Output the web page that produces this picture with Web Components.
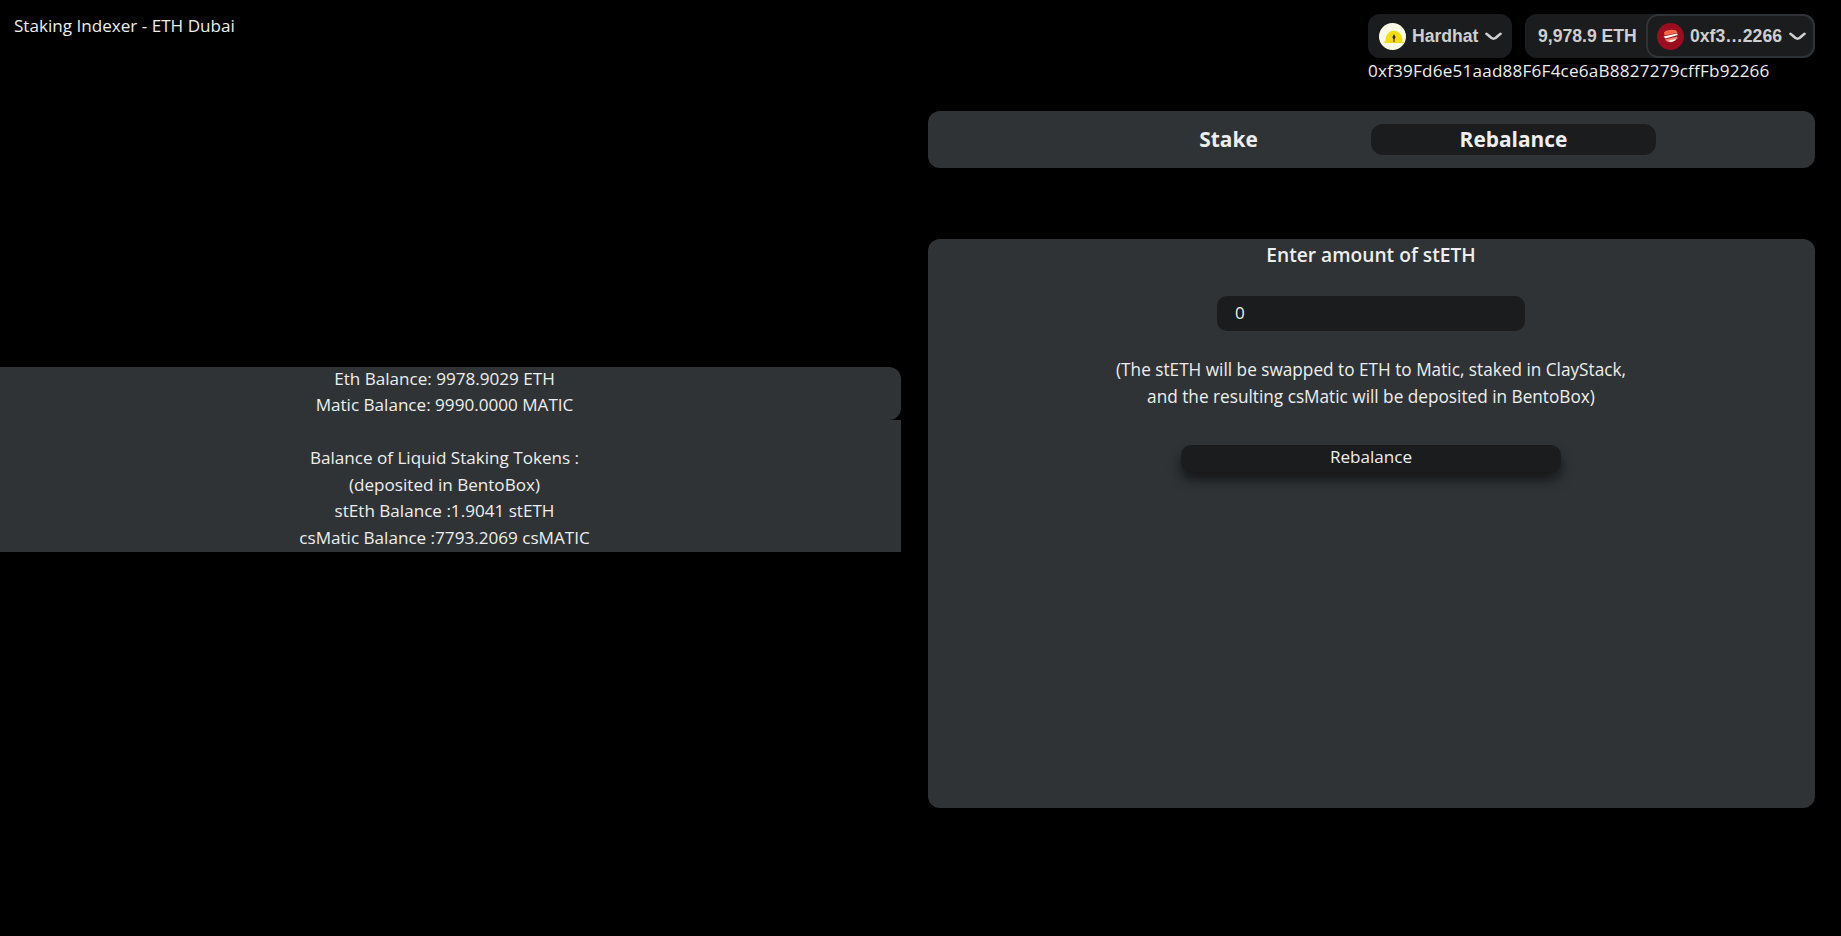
<!DOCTYPE html>
<html><head><meta charset="utf-8">
<style>
html,body{margin:0;background:#000;height:100%}
body{font-family:"Open Sans","Noto Sans",sans-serif;color:#e8e8e8;font-size:17.1px;overflow:hidden}
</style></head><body>
<staking-app></staking-app>
<script>
function def(name, html){
  customElements.define(name, class extends HTMLElement{
    constructor(){super();const r=this.attachShadow({mode:'open'});r.innerHTML=html;}
  });
}
const chev=`<svg width="17" height="9" viewBox="0 0 17 9" fill="none" style="flex:none;margin-left:1px"><path d="M1.500 1.800C4 3 6 6.800 8.500 6.800S13 3 15.500 1.800" stroke="#cfcfcf" stroke-width="2.600" stroke-linecap="round"/></svg>`;
def('wallet-pill',`<style>
:host{display:inline-flex;align-items:center;height:44px;box-sizing:border-box;background:#1a1c1e;border-radius:12px;font:700 17.6px "Liberation Sans",Arial,sans-serif;color:#cfcfcf;white-space:nowrap}
:host([chain]){padding:0 10px 0 11px;gap:6px;width:144px}
:host([balance]){width:290px;padding-left:13px}
</style><slot></slot>`);
def('account-chip',`<style>
:host{display:inline-flex;align-items:center;height:44px;width:169px;box-sizing:border-box;border:2px solid #2f3336;border-radius:12px;background:#1a1c1e;padding:0 9px;gap:6px;font:700 17.6px "Liberation Sans",Arial,sans-serif;color:#cfcfcf;white-space:nowrap}
</style><slot></slot>`);
def('wallet-bar',`<style>
:host{display:block;width:447px}
.row{display:flex;gap:13px}
.addr{margin-top:2px;font-size:17.1px;line-height:22px;letter-spacing:.21px;color:#eee;white-space:nowrap}
svg{display:block;flex:none}
</style>
<div class="row">
<wallet-pill chain>
<svg width="27" height="27" viewBox="0 0 27 27"><circle cx="13.500" cy="13.500" r="13.500" fill="#fffde8"/><path d="M5.500 20v-2h1c0-5.500 3.200-10.300 8.500-10.300s8.500 4.800 8.500 10.300v.5l2 1.500z" fill="#f5dc16"/><path d="M15 11l1.600 3.200L15 17.200l-1.600-3z" fill="#2b2b12"/><rect x="14.500" y="16.500" width="1" height="2.500" fill="#2b2b12"/></svg>
<span>Hardhat</span>${chev}
</wallet-pill>
<wallet-pill balance><span>9,978.9 ETH</span></wallet-pill>
</div>
<div class="addr">0xf39Fd6e51aad88F6F4ce6aB8827279cffFb92266</div>`);
def('staking-tabs',`<style>
:host{display:flex;justify-content:center;align-items:center;height:57px;background:#2f3336;border-radius:12px;padding-right:1px}
.t{width:285px;height:31px;border-radius:12px;display:flex;align-items:center;justify-content:center;font-weight:700;font-size:20.900px;color:#eee;padding-bottom:2px;box-sizing:border-box}
.on{background:#1a1c1e}
</style><div class="t">Stake</div><div class="t on">Rebalance</div>`);
def('rebalance-card',`<style>
:host{display:flex;flex-direction:column;align-items:center;height:569px;margin-top:71px;background:#2f3336;border-radius:12px;box-sizing:border-box;padding:2px 1px 0 0}
h2{margin:0;font-size:19.200px;line-height:27px;font-weight:600;color:#eee}
.in{margin-top:28px;width:308px;height:35px;box-sizing:border-box;background:#1a1c1e;border-radius:10px;padding:0 18px 3px;display:flex;align-items:center;color:#eee}
p{margin:25px 0 0;text-align:center;line-height:27px;color:#eee;font-size:17.220px}
button{all:unset;box-sizing:border-box;margin-top:35px;width:380px;height:27px;padding-bottom:3px;background:#1a1c1e;border-radius:10px;text-align:center;line-height:24px;color:#eee;box-shadow:0 8px 12px rgba(0,0,0,.55)}
</style>
<h2>Enter amount of stETH</h2>
<div class="in">0</div>
<p>(The stETH will be swapped to ETH to Matic, staked in ClayStack,<br>and the resulting csMatic will be deposited in BentoBox)</p>
<button>Rebalance</button>`);
def('balance-panel',`<style>
:host{display:block;text-align:center;line-height:26.4px;color:#eee}
.a{background:#2f3336;border-radius:0 12px 12px 0;height:53px;padding-right:12px}
.b{background:#2f3336;height:132px;padding-right:12px}
.t{position:relative;top:-1px}
</style>
<div class="a"><div class="t">Eth Balance: 9978.9029 ETH<br>Matic Balance: 9990.0000 MATIC</div></div>
<div class="b"><div class="t"><br>Balance of Liquid Staking Tokens :<br>(deposited in BentoBox)<br>stEth Balance :1.9041 stETH<br>csMatic Balance :7793.2069 csMATIC</div></div>`);
def('staking-app',`<style>
:host{display:block;height:936px;position:relative}
header{display:flex;justify-content:space-between;height:111px;padding:14px 26px 0 14px;box-sizing:border-box}
.title{line-height:24px;color:#eee}
main{display:grid;grid-template-columns:901px 887px;column-gap:27px;align-items:center}
.over{position:absolute;left:1646px;top:14px}
</style>
<header><div class="title">Staking Indexer - ETH Dubai</div><wallet-bar></wallet-bar></header>
<main><balance-panel></balance-panel><section><staking-tabs></staking-tabs><rebalance-card></rebalance-card></section></main>
<div class="over"><account-chip>
<svg width="27" height="27" viewBox="0 0 27 27" style="flex:none"><circle cx="13.500" cy="13.500" r="13.500" fill="#9a0e20"/><path d="M7 9.500c2-2.500 7-3.500 12-2.200l1.500 2.700-13 2.500z" fill="#f7684a"/><path d="M6.500 13.500l13.500-3 1 1.500-12.500 3.500z" fill="#fff"/><path d="M8 16.500l12-3 .8 2c-2 .6-3 3.500-7 3.700-2.500.1-4.800-1-5.800-2.700z" fill="#f58a70"/><path d="M11 18l8-2-1 1.500-4 1.500z" fill="#fff"/></svg>
<span>0xf3…2266</span>${chev}
</account-chip></div>`);
</script>
</body></html>
